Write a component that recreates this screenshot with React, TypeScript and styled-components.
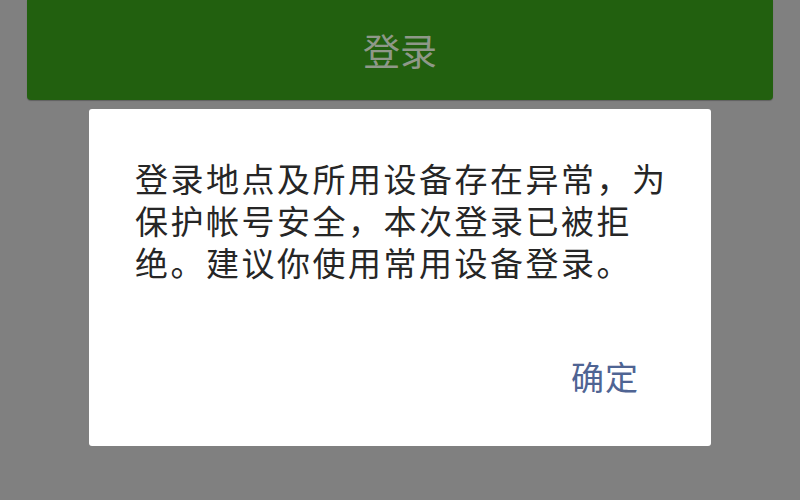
import React from "react";
import styled, { createGlobalStyle } from "styled-components";

const GlobalStyle = createGlobalStyle`
  html, body {
    margin: 0;
    padding: 0;
    background: #808080;
  }
  body {
    font-family: "Noto Sans CJK SC", "Noto Sans", sans-serif;
  }
`;

const Screen = styled.div`
  width: 800px;
  height: 500px;
  display: flex;
  flex-direction: column;
  padding: 0 27px;
  box-sizing: border-box;
  background: #808080;
  overflow: hidden;
`;

const LoginButton = styled.button`
  height: 100px;
  width: 100%;
  flex-shrink: 0;
  border: none;
  border-radius: 0 0 4px 4px;
  background: #22600f;
  box-shadow: 0 1px 1px rgba(0, 0, 0, 0.25);
  color: #8f9889;
  font-family: inherit;
  font-size: 37px;
  padding: 0;
  cursor: pointer;
`;

const Dialog = styled.div`
  margin: 9px 62px 0;
  height: 337px;
  display: flex;
  flex-direction: column;
  padding: 48px 0 0 46px;
  box-sizing: border-box;
  background: #ffffff;
  border-radius: 3px;
`;

const Message = styled.p`
  margin: 0;
  width: 545px;
  font-size: 33px;
  line-height: 42px;
  letter-spacing: 2.5px;
  color: #262626;
`;

const Actions = styled.div`
  display: flex;
  justify-content: flex-end;
  margin-top: 72px;
  padding-right: 72px;
`;

const ActionLink = styled.button<{ $primary?: boolean }>`
  border: none;
  background: none;
  padding: 0;
  font-family: inherit;
  font-size: 33px;
  line-height: 42px;
  letter-spacing: 1px;
  color: ${(p) => (p.$primary ? "#4f6493" : "#555")};
  cursor: pointer;
`;

export default function App() {
  return (
    <>
      <GlobalStyle />
      <Screen>
        <LoginButton>登录</LoginButton>
        <Dialog>
          <Message>
            登录地点及所用设备存在异常，为保护帐号安全，本次登录已被拒绝。建议你使用常用设备登录。
          </Message>
          <Actions>
            <ActionLink $primary>确定</ActionLink>
          </Actions>
        </Dialog>
      </Screen>
    </>
  );
}
